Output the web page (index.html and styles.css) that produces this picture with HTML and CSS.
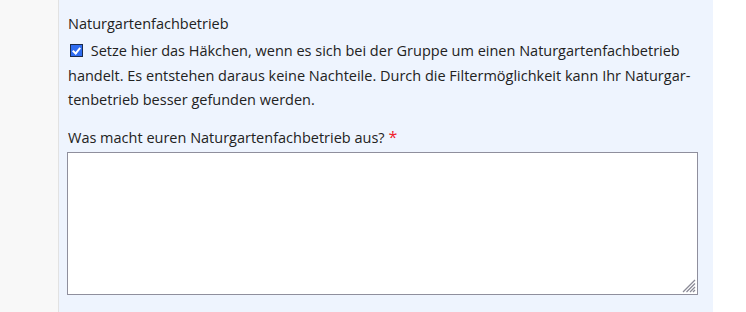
FILE: index.html
```html
<!DOCTYPE html>
<html lang="de">
<head>
<meta charset="utf-8">
<title>Naturgartenfachbetrieb</title>
<link rel="stylesheet" href="styles.css">
</head>
<body>
<div class="page">
  <aside class="sidebar"></aside>
  <main class="panel">
    <div class="field">
      <div class="field-title">Naturgartenfachbetrieb</div>
      <label class="check-row">
        <input type="checkbox" class="check" checked>
        <span class="check-text">Setze hier das Häkchen, wenn es sich bei der Gruppe um einen Naturgartenfachbetrieb handelt. Es entstehen daraus keine Nachteile. Durch die Filtermöglichkeit kann Ihr Naturgar&shy;tenbetrieb besser gefunden werden.</span>
      </label>
    </div>
    <div class="field field-text">
      <label class="field-label" for="desc">Was macht euren Naturgartenfachbetrieb aus? <span class="req">*</span></label>
      <div class="textarea-wrap">
        <textarea id="desc" class="textarea"></textarea>
        <svg class="grip" width="14" height="14" viewBox="0 0 14 14" aria-hidden="true">
          <g stroke="#8a8a96" stroke-width="1.2">
            <line x1="13" y1="1" x2="1" y2="13"/>
            <line x1="13" y1="4.5" x2="4.5" y2="13"/>
            <line x1="13" y1="8" x2="8" y2="13"/>
            <line x1="13" y1="11" x2="11" y2="13"/>
          </g>
        </svg>
      </div>
    </div>
  </main>
  <div class="rest"></div>
</div>
</body>
</html>
```

FILE: styles.css
```css
html, body {
  margin: 0;
  padding: 0;
  height: 100%;
}
body {
  font-family: "Open Sans", "Noto Sans", sans-serif;
  font-size: 14.5px;
  color: #222;
  background: #fff;
}
.page {
  display: flex;
  height: 312px;
  overflow: hidden;
}
.sidebar {
  width: 58px;
  flex: none;
  background: #f8f8f8;
  border-right: 1px solid #e2e2e2;
}
.panel {
  width: 646px;
  flex: none;
  background: #eef4fe;
  padding: 12px 0 0 8px;
}
.rest {
  flex: 1;
  background: #fff;
}
.field {
  width: 631px;
}
.field-title {
  line-height: 24px;
  padding-left: 1px;
}
.check-row {
  display: block;
  line-height: 24.5px;
  margin-top: 3px;
  padding-left: 1px;
}
.check {
  appearance: none;
  -webkit-appearance: none;
  width: 13px;
  height: 13px;
  margin: 0 4px 0 2px;
  vertical-align: -1px;
  box-sizing: border-box;
  border: 1px solid #1b2b4b;
  background: #2f6cf0;
  position: relative;
}
.check:checked::after {
  content: "";
  position: absolute;
  left: 3px;
  top: 1px;
  width: 3px;
  height: 6px;
  border: solid #fff;
  border-width: 0 2px 2px 0;
  transform: rotate(40deg);
}
.check-text {
  hyphens: manual;
}
.field-text {
  margin-top: 12px;
}
.field-label {
  display: block;
  line-height: 24px;
  padding-left: 1px;
  margin-bottom: 2px;
}
.req {
  color: #f0202a;
  font-size: 16px;
}
.textarea-wrap {
  position: relative;
  width: 631px;
}
.textarea {
  display: block;
  width: 631px;
  height: 143px;
  box-sizing: border-box;
  margin: 0;
  border: 1px solid #8f8f9d;
  border-radius: 0;
  background: #fff;
  resize: none;
  font: inherit;
}
.grip {
  position: absolute;
  right: 2px;
  bottom: 2px;
  pointer-events: none;
}
```
